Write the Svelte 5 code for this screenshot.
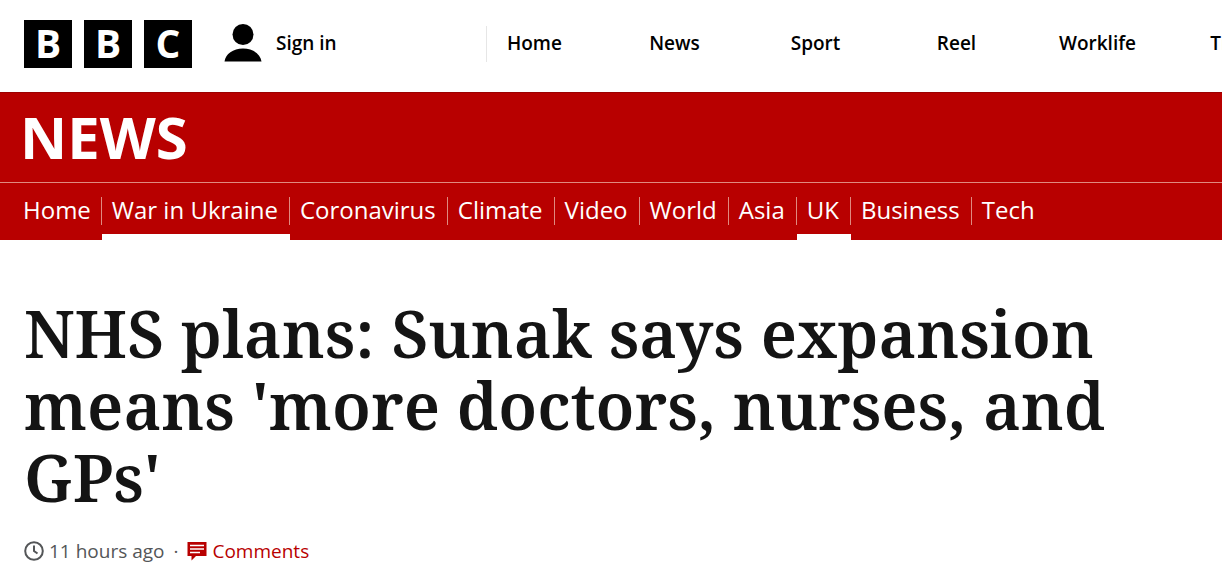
<script>
  const services = ['Home', 'News', 'Sport', 'Reel', 'Worklife', 'Travel'];
  const sections = [
    { label: 'Home' },
    { label: 'War in Ukraine', current: true },
    { label: 'Coronavirus' },
    { label: 'Climate' },
    { label: 'Video' },
    { label: 'World' },
    { label: 'Asia' },
    { label: 'UK', current: true },
    { label: 'Business' },
    { label: 'Tech' }
  ];
</script>

<header class="masthead">
  <a class="logo" href="#home" aria-label="BBC">
    {#each ['B', 'B', 'C'] as letter}
      <span class="block">{letter}</span>
    {/each}
  </a>
  <a class="account" href="#signin">
    <svg width="38" height="38" viewBox="0 0 38 38" aria-hidden="true">
      <circle cx="19" cy="10.5" r="10.5" />
      <path d="M.5 37.5C1.5 30 9 24.5 19 24.5S36.5 30 37.5 37.5Z" />
    </svg>
    <span>Sign in</span>
  </a>
  <nav class="services" aria-label="BBC">
    <ul>
      {#each services as name}
        <li><a href="#{name.toLowerCase()}">{name}</a></li>
      {/each}
    </ul>
  </nav>
</header>

<div class="brand">
  <a class="title" href="#news">NEWS</a>
  <nav class="sections" aria-label="News">
    <ul>
      {#each sections as s}
        <li class:current={s.current}><a href="#{s.label}"><span>{s.label}</span></a></li>
      {/each}
    </ul>
  </nav>
</div>

<main>
  <h1>NHS plans: Sunak says expansion means 'more doctors, nurses, and GPs'</h1>
  <div class="meta">
    <svg class="clock" width="20" height="20" viewBox="0 0 20 20" aria-hidden="true">
      <circle cx="10" cy="10" r="8.8" />
      <path d="M10 4.5V10L13.5 12.500" />
    </svg>
    <time>11 hours ago</time>
    <span class="dot">·</span>
    <a class="comments" href="#comments">
      <svg width="20" height="20" viewBox="0 0 20 20" aria-hidden="true">
        <path d="M.5 1H19.5V15H9L4.5 19.500V15H.5Z" />
        <path class="lines" d="M3 4.500H17M3 8H17M3 11.500H13" />
      </svg>
      <span>Comments</span>
    </a>
  </div>
</main>

<style>
  :global(body) {
    margin: 0;
    background: #fff;
    font-family: 'Open Sans', 'Noto Sans', sans-serif;
  }
  a {
    color: inherit;
    text-decoration: none;
  }
  ul {
    display: flex;
    margin: 0;
    padding: 0;
    list-style: none;
  }
  .masthead {
    display: flex;
    align-items: center;
    box-sizing: border-box;
    height: 92px;
    padding-left: 24px;
    padding-bottom: 4px;
    overflow: hidden;
    color: #000;
    font-size: 19px;
    font-weight: 600;
  }
  .logo {
    display: flex;
    flex: none;
    gap: 12px;
  }
  .block {
    width: 48px;
    height: 48px;
    background: #000;
    color: #fff;
    font-size: 39px;
    font-weight: 700;
    line-height: 46px;
    text-align: center;
  }
  .account {
    display: flex;
    flex: none;
    align-items: center;
    gap: 14px;
    width: 262px;
    margin-left: 32px;
    padding-bottom: 2px;
    line-height: 36px;
  }
  .services {
    flex: 1;
    min-width: 0;
    border-left: 1px solid #e6e6e6;
  }
  .services li {
    flex: 0 0 141px;
    padding-bottom: 2px;
    line-height: 34px;
    text-align: center;
  }
  .services li:first-child {
    flex-basis: 97px;
    padding-left: 20px;
    text-align: left;
  }
  .brand {
    border-top: 1px solid #9c0000;
    background: #b80000;
    color: #fff;
  }
  .title {
    display: block;
    padding: 0 0 2px 20px;
    font-size: 58px;
    font-weight: 700;
    line-height: 87px;
  }
  .sections {
    border-top: 1px solid #e08a80;
    padding-left: 23px;
    font-size: 24px;
  }
  .sections li {
    padding: 14px 0 9px;
    border-bottom: 6px solid transparent;
  }
  .sections li.current {
    border-bottom-color: #fff;
  }
  .sections a {
    display: block;
    padding: 0 11px 2px 10px;
    border-right: 1px solid #e08a80;
    line-height: 26px;
    white-space: nowrap;
  }
  .sections li:first-child a {
    padding-left: 0;
    padding-right: 10px;
  }
  .sections li:last-child a {
    border-right: 0;
  }
  main {
    padding: 57px 24px 0;
  }
  h1 {
    margin: 0;
    color: #141414;
    font-family: 'Noto Serif', 'DejaVu Serif Condensed', 'DejaVu Serif', serif;
    font-size: 65px;
    font-weight: 600;
    line-height: 72px;
  }
  .meta {
    display: flex;
    align-items: center;
    margin-top: 25px;
    color: #545658;
    font-size: 19px;
    line-height: 26px;
  }
  .clock {
    margin-right: 5px;
    fill: none;
    stroke: #545658;
    stroke-width: 2;
  }
  .dot {
    padding: 0 9px;
  }
  .comments {
    display: flex;
    align-items: center;
    gap: 5px;
    color: #b80000;
  }
  .comments svg {
    fill: #b80000;
  }
  .comments .lines {
    stroke: #fff;
    stroke-width: 1.5;
  }
</style>
